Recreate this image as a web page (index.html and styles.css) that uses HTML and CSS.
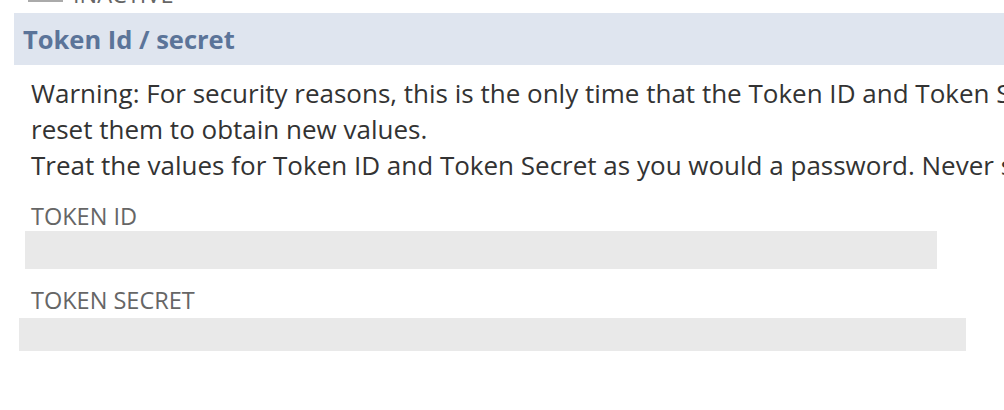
FILE: index.html
```html
<!DOCTYPE html>
<html lang="en">
<head>
  <meta charset="UTF-8">
  <title>Token Id / secret</title>
  <link rel="stylesheet" href="styles.css">
</head>
<body>

<div class="status-row">
  <div class="status-inner">
    <span class="status-box"></span>
    <span class="status-text">INACTIVE</span>
  </div>
</div>

<section class="token-section">
  <h2 class="section-title">Token Id / secret</h2>

  <div class="section-body">
    <p class="warning">Warning: For security reasons, this is the only time that the Token ID and Token Secret values are displayed. If you lose them, you will need to reset them to obtain new values.</p>
    <p class="warning">Treat the values for Token ID and Token Secret as you would a password. Never share them with anyone.</p>

    <div class="field field-id">
      <label class="field-label">TOKEN ID</label>
      <div class="field-value"></div>
    </div>

    <div class="field field-secret">
      <label class="field-label">TOKEN SECRET</label>
      <div class="field-value"></div>
    </div>
  </div>
</section>

</body>
</html>
```

FILE: styles.css
```css
* { margin: 0; padding: 0; box-sizing: border-box; }

body {
  font-family: 'Open Sans', 'Liberation Sans', sans-serif;
  background: #fff;
  color: #333;
  overflow: hidden;
  width: 1004px;
  height: 410px;
}

/* only the bottom edge of the row above is on screen */
.status-row {
  height: 4px;
  overflow: hidden;
}

.status-inner {
  display: flex;
  align-items: flex-start;
  margin-top: -20px;
  margin-left: 28px;
}

.status-box {
  width: 35px;
  height: 22px;
  background: #eee;
  border-bottom: 2px solid #aaa;
}

.status-text {
  margin-left: 10px;
  font-size: 23.5px;
  line-height: 28px;
  color: #666;
}

.token-section {
  margin-top: 9px;
}

.section-title {
  margin-left: 14px;
  height: 52px;
  padding-left: 9px;
  background: #dfe5ef;
  color: #5b7499;
  font-size: 25.5px;
  font-weight: bold;
  line-height: 52px;
  white-space: nowrap;
}

.section-body {
  padding-top: 10px;
}

.warning {
  width: 1725px;
  margin-left: 31px;
  font-size: 26px;
  line-height: 36px;
  color: #333;
}

.field { margin-top: 19px; }

.field-label {
  display: block;
  margin-left: 31px;
  font-size: 23.5px;
  line-height: 28px;
  color: #666;
}

.field-value {
  background: #e9e9e9;
}

.field-id .field-value {
  margin-top: 1px;
  margin-left: 25px;
  width: 912px;
  height: 38px;
}

.field-secret { margin-top: 17px; }

.field-secret .field-value {
  margin-top: 4px;
  margin-left: 19px;
  width: 947px;
  height: 33px;
}
```
